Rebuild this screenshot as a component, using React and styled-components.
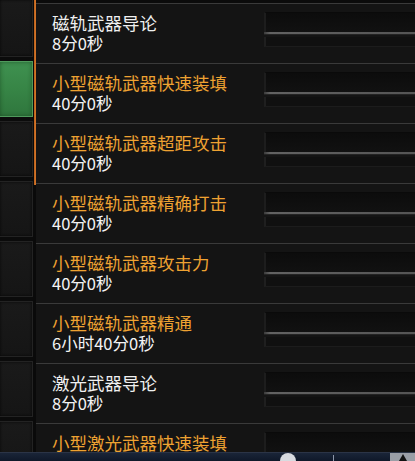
import React from "react";
import styled, { createGlobalStyle } from "styled-components";

const Global = createGlobalStyle`
  html, body { margin: 0; padding: 0; background: #0b0b0b; }
  #root { width: 415px; height: 461px; }
`;

const Screen = styled.div`
  position: relative;
  width: 415px;
  height: 461px;
  overflow: hidden;
  background: #0b0b0b;
  display: flex;
  flex-direction: column;
  font-family: "Noto Sans CJK SC", "Noto Sans", sans-serif;
`;

const Body = styled.div`
  flex: 1;
  display: flex;
  min-height: 0;
  overflow: hidden;
`;

const TileColumn = styled.div`
  width: 33px;
  display: flex;
  flex-direction: column;
  gap: 4px;
  margin-top: -1px;
  flex-shrink: 0;
`;

const Tile = styled.div`
  height: ${(p) => (p.$first ? 58 : 56)}px;
  flex-shrink: 0;
  box-sizing: border-box;
  border: 1px solid ${(p) => (p.$active ? "#4f9a5c" : "#232323")};
  border-left: none;
  background: ${(p) =>
    p.$active
      ? "linear-gradient(180deg, #3f9150 0%, #378546 50%, #2f763d 100%)"
      : "linear-gradient(180deg, #1a1a1a 0%, #151515 100%)"};
  box-shadow: ${(p) =>
    p.$active
      ? "inset 0 0 4px rgba(20, 60, 25, 0.6)"
      : "inset 0 0 3px rgba(0, 0, 0, 0.7)"};
`;

const Divider = styled.div`
  width: 3px;
  flex-shrink: 0;
  display: flex;
  flex-direction: column;
  background: #0a0a0a;
`;

const Accent = styled.div`
  margin-left: 1px;
  width: 2px;
  height: ${(p) => p.$length}px;
  background: linear-gradient(90deg, #b8601c, #d9782a);
`;

const List = styled.div`
  flex: 1;
  display: flex;
  flex-direction: column;
  padding-top: 3px;
  background: #0b0b0b;
  min-width: 0;
`;

const Row = styled.div`
  height: 60px;
  flex-shrink: 0;
  box-sizing: border-box;
  border-top: 1px solid #3a3a3a;
  background: #141414;
  display: grid;
  grid-template-columns: 1fr 151px;
`;

const Info = styled.div`
  padding: 8px 0 0 16px;
  display: flex;
  flex-direction: column;
  white-space: nowrap;
`;

const Title = styled.div`
  font-size: 17.5px;
  line-height: 21px;
  color: ${(p) => (p.$highlight ? "#eea232" : "#f0f0f0")};
`;

const Duration = styled.div`
  font-size: 16.5px;
  line-height: 21px;
  color: #f4f4f4;
`;

const Meter = styled.div`
  padding-top: 8px;
  display: flex;
  flex-direction: column;
`;

const MeterTrack = styled.div`
  height: 20px;
  box-sizing: border-box;
  background: linear-gradient(180deg, #0c0c0c 0%, #111 100%);
  border-left: 2px solid #1d1d1d;
  border-top: 1px solid #0a0a0a;
`;

const MeterGlint = styled.div`
  height: 2px;
  background: linear-gradient(90deg, #3a3a3a 0%, #626262 4%, #555 100%);
  border-bottom: 1px solid #232323;
`;

const MeterBase = styled.div`
  margin-top: 2px;
  height: 10px;
  box-sizing: border-box;
  background: #101010;
  border-left: 2px solid #1f1f1f;
  border-bottom: 1px solid #1c1c1c;
`;

const Taskbar = styled.div`
  height: 8px;
  flex-shrink: 0;
  background: linear-gradient(180deg, #1a2538 0%, #0f1829 100%);
  border-top: 1px solid #2b3446;
  position: relative;
`;

const TrayGlyph = styled.svg`
  position: absolute;
  top: 0;
  left: ${(p) => p.$x}px;
`;

const TrayButton = styled.div`
  position: absolute;
  top: 0;
  right: 0;
  width: 25px;
  height: 8px;
  background: #9a9ea6;
  display: flex;
  justify-content: center;
`;

const skills = [
  { name: "磁轨武器导论", time: "8分0秒", hi: false },
  { name: "小型磁轨武器快速装填", time: "40分0秒", hi: true },
  { name: "小型磁轨武器超距攻击", time: "40分0秒", hi: true },
  { name: "小型磁轨武器精确打击", time: "40分0秒", hi: true },
  { name: "小型磁轨武器攻击力", time: "40分0秒", hi: true },
  { name: "小型磁轨武器精通", time: "6小时40分0秒", hi: true },
  { name: "激光武器导论", time: "8分0秒", hi: false },
  { name: "小型激光武器快速装填", time: null, hi: true },
];

export default function App() {
  return (
    <Screen>
      <Global />
      <Body>
        <TileColumn>
          {Array.from({ length: 8 }).map((_, i) => (
            <Tile key={i} $first={i === 0} $active={i === 1} />
          ))}
        </TileColumn>
        <Divider>
          <Accent $length={185} />
        </Divider>
        <List>
          {skills.map((s, i) => (
            <Row key={i}>
              <Info>
                <Title $highlight={s.hi}>{s.name}</Title>
                {s.time && <Duration>{s.time}</Duration>}
              </Info>
              <Meter>
                <MeterTrack />
                <MeterGlint />
                <MeterBase />
              </Meter>
            </Row>
          ))}
        </List>
      </Body>
      <Taskbar>
        <TrayGlyph $x={279} width="18" height="8" viewBox="0 0 18 8">
          <path d="M1 8 A8 8 0 0 1 17 8 Z" fill="#d8dbe0" />
        </TrayGlyph>
        <TrayGlyph $x={332} width="3" height="8" viewBox="0 0 3 8">
          <rect x="1" y="2" width="1" height="6" fill="#8d97aa" />
        </TrayGlyph>
        <TrayButton>
          <svg width="10" height="8" viewBox="0 0 10 8">
            <path d="M5 1 L9 8 L1 8 Z" fill="#111" />
          </svg>
        </TrayButton>
      </Taskbar>
    </Screen>
  );
}
